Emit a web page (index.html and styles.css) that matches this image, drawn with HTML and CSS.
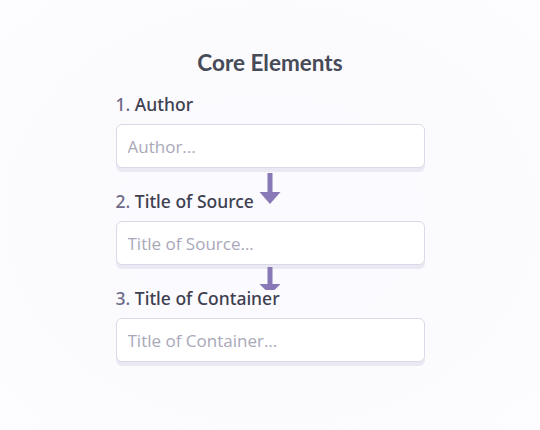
FILE: index.html
```html
<!DOCTYPE html>
<html lang="en">
<head>
<meta charset="utf-8">
<title>Core Elements</title>
<link rel="stylesheet" href="styles.css">
</head>
<body>
<main class="panel">
  <h1 class="title">Core Elements</h1>
  <div class="field">
    <label class="label" for="author"><span class="num">1.</span> Author</label>
    <input class="input" id="author" type="text" placeholder="Author...">
    <svg class="arrow" width="22" height="32" viewBox="0 0 22 32" aria-hidden="true">
      <rect x="8.5" y="0" width="5" height="20" fill="#8878b6"/>
      <polygon points="0.5,19 21.5,19 11,31" fill="#8878b6"/>
    </svg>
  </div>
  <div class="field">
    <label class="label" for="source"><span class="num">2.</span> Title of Source</label>
    <input class="input" id="source" type="text" placeholder="Title of Source...">
    <svg class="arrow arrow-cut" width="22" height="24" viewBox="0 0 22 24" aria-hidden="true">
      <rect x="8.5" y="0" width="5" height="18" fill="#8878b6"/>
      <polygon points="0.5,17 21.5,17 15.5,23 6.5,23" fill="#8878b6"/>
    </svg>
  </div>
  <div class="field">
    <label class="label" for="container"><span class="num">3.</span> Title of Container</label>
    <input class="input" id="container" type="text" placeholder="Title of Container...">
  </div>
</main>
</body>
</html>
```
FILE: styles.css
```css
html, body {
  margin: 0;
  height: 100%;
}
body {
  background: radial-gradient(ellipse at 50% 50%, #fbfaff 0%, #fbfafd 60%, #fdfcfe 100%);
  font-family: "Open Sans", "Noto Sans", sans-serif;
  color: #3f4150;
}
.panel {
  width: 309px;
  margin: 0 auto;
  padding-top: 49px;
  display: flex;
  flex-direction: column;
}
.title {
  margin: 0 0 16px;
  text-align: center;
  font-family: Lato, "Open Sans", sans-serif;
  font-size: 22.5px;
  font-weight: 700;
  line-height: 28px;
  color: #474b57;
}
.field {
  position: relative;
  display: flex;
  flex-direction: column;
  gap: 9px;
  margin-bottom: 22px;
}
.label {
  font-family: "Noto Sans", "Open Sans", sans-serif;
  font-size: 17.5px;
  line-height: 22px;
  font-weight: 500;
  color: #3e4050;
  position: relative;
  z-index: 1;
}
.num {
  color: #6c6a88;
}
.input {
  box-sizing: border-box;
  width: 309px;
  height: 44px;
  margin: 0;
  padding: 0 11px;
  border: 1.5px solid #dbd9e7;
  border-radius: 6px;
  background: #ffffff;
  box-shadow: 0 4px 0 #eae8f2;
  font-family: inherit;
  font-size: 17px;
  color: #3f4150;
  outline: none;
}
.input::placeholder {
  color: #a9a8b9;
}
.arrow {
  position: absolute;
  left: 143.5px;
  top: 100%;
  margin-top: 5px;
}
.arrow-cut {
  margin-top: 2px;
}
```
